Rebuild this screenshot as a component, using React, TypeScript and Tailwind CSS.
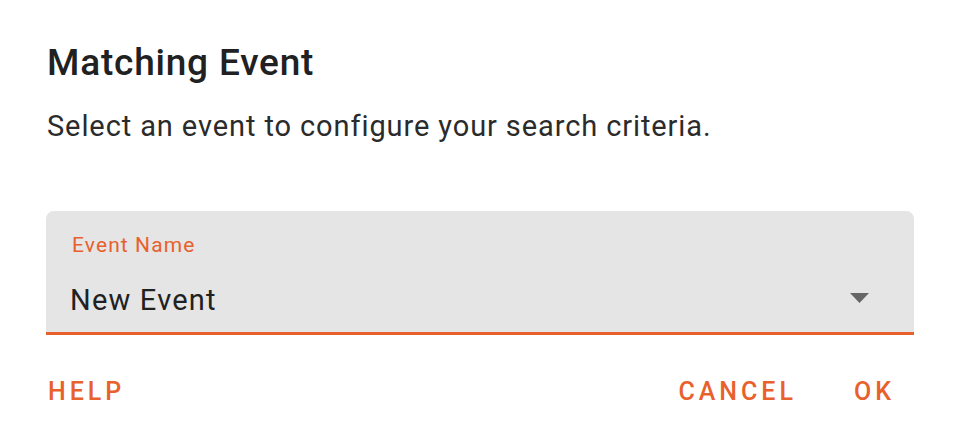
export default function App() {
  return (
    <div className="w-[960px] h-[444px] bg-white font-['Roboto',sans-serif] overflow-hidden">
      <div className="pt-[41px] pl-[47px]">
        <h1 className="text-[37px] leading-[44px] font-medium tracking-[0.8px] text-[#212121]">
          Matching Event
        </h1>
        <p className="mt-[23px] text-[29px] leading-[36px] tracking-[0.9px] text-[#2b2b2b]">
          Select an event to configure your search criteria.
        </p>
      </div>

      {/* Campo de selección */}
      <div className="mt-[67px] mx-[46px] bg-[#e5e5e5] rounded-t-[8px] border-b-[3px] border-[#e8612c] pt-[22px] pb-[14px] pl-[24px] pr-[45px]">
        <div className="pl-[2px] text-[21px] leading-[24px] tracking-[1.1px] text-[#e8612c]">
          Event Name
        </div>
        <div className="mt-[25px] flex items-center justify-between">
          <span className="text-[29px] leading-[36px] tracking-[1.2px] text-[#212121]">
            New Event
          </span>
          <svg width="19" height="10" viewBox="0 0 19 10" className="-mt-[4px]">
            <path d="M0 0 L19 0 L9.5 10 Z" fill="#666666" />
          </svg>
        </div>
      </div>

      {/* Botones */}
      <div className="flex items-center pl-[48px] pr-[65px] mt-[42px]">
        <button className="text-[25px] leading-[30px] font-medium tracking-[4px] text-[#e8612c]">
          HELP
        </button>
        <div className="flex-1" />
        <button className="text-[25px] leading-[30px] font-medium tracking-[4px] text-[#e8612c]">
          CANCEL
        </button>
        <button className="ml-[57px] text-[25px] leading-[30px] font-medium tracking-[4px] text-[#e8612c]">
          OK
        </button>
      </div>
    </div>
  );
}
